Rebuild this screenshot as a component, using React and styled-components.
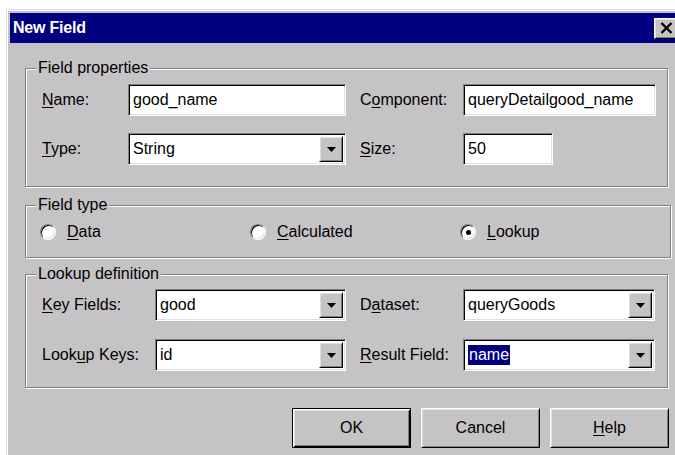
import React from 'react';
import styled, { createGlobalStyle, css } from 'styled-components';

const face = '#c6c3c6';

const GlobalStyle = createGlobalStyle`
  html, body {
    margin: 0;
    padding: 0;
    background: #fff;
    overflow: hidden;
  }
  body {
    font-family: 'Liberation Sans', Arial, sans-serif;
    font-size: 16px;
    color: #000;
  }
`;

// 3D edges shared by the controls
const sunken = css`
  box-sizing: border-box;
  background: #fff;
  border: 1px solid;
  border-color: #808080 #fff #fff #808080;
  box-shadow: inset 1px 1px 0 #000, inset -1px -1px 0 #dfdfdf;
`;

const raised = css`
  box-sizing: border-box;
  background: ${face};
  border: 1px solid;
  border-color: #fff #000 #000 #fff;
  box-shadow: inset 1px 1px 0 #dfdfdf, inset -1px -1px 0 #808080;
`;

const Window = styled.div`
  box-sizing: border-box;
  margin: 9px 0 0 6px;
  width: 680px;
  height: 460px;
  padding: 3px 0 0 3px;
  background: ${face};
  border-top: 1px solid #dcdcdc;
  border-left: 1px solid #dcdcdc;
  box-shadow: inset 1px 1px 0 #fff;
`;

const TitleBar = styled.div`
  display: flex;
  align-items: center;
  justify-content: space-between;
  height: 30px;
  padding: 0 8px 0 3px;
  background: #000080;
`;

const Title = styled.span`
  color: #fff;
  font-weight: bold;
  font-size: 16px;
  letter-spacing: -0.2px;
`;

const CloseButton = styled.button`
  ${raised};
  display: flex;
  align-items: center;
  justify-content: center;
  width: 24px;
  height: 21px;
  padding: 0;
`;

const Body = styled.div`
  display: flex;
  flex-direction: column;
  width: 644px;
  padding: 16px 0 0 15px;
`;

const Group = styled.fieldset`
  box-sizing: border-box;
  width: 643px;
  margin: ${p => p.$gap}px 0 0;
  padding: 0;
  border: 1px solid #808080;
  box-shadow: inset 1px 1px 0 #fff, 1px 1px 0 #fff;
`;

const Legend = styled.legend`
  margin-left: 10px;
  padding: 0 2px;
  line-height: 18px;
  background: ${face};
`;

const FieldGrid = styled.div`
  display: grid;
  grid-template-columns: ${p => p.$columns};
  column-gap: 14px;
  row-gap: ${p => p.$rowGap}px;
  align-items: center;
  padding: ${p => p.$pad};
`;

const Label = styled.label`
  white-space: nowrap;
`;

const Key = styled.span`
  text-decoration: underline;
  text-underline-offset: 2px;
`;

const TextField = styled.div`
  ${sunken};
  display: flex;
  align-items: center;
  height: 32px;
  width: ${p => (p.$width ? `${p.$width}px` : 'auto')};
  padding: 0 4px;
  white-space: nowrap;
`;

const Combo = styled.div`
  ${sunken};
  display: flex;
  height: 32px;
  padding: 2px;
`;

const ComboValue = styled.span`
  flex: 1;
  display: flex;
  align-items: center;
  padding-left: 2px;
`;

const Selected = styled.span`
  background: #000080;
  color: #fff;
  padding: 0 1px;
  line-height: 20px;
`;

const DropButton = styled.span`
  ${raised};
  display: flex;
  align-items: center;
  justify-content: center;
  width: 24px;
`;

const RadioRow = styled.div`
  display: grid;
  grid-template-columns: 210px 210px 210px;
  padding: 9px 0 16px 14px;
`;

const RadioOption = styled.label`
  display: flex;
  align-items: center;
  gap: 11px;
  height: 18px;
`;

const RadioCircle = styled.span`
  box-sizing: border-box;
  display: flex;
  align-items: center;
  justify-content: center;
  width: 16px;
  height: 16px;
  border-radius: 50%;
  background: #fff;
  border: 1px solid;
  border-color: #808080 #fff #fff #808080;
  box-shadow: inset 1px 1px 0 #000, inset -1px -1px 0 #dfdfdf;

  &::after {
    content: '';
    display: ${p => (p.$checked ? 'block' : 'none')};
    width: 5px;
    height: 5px;
    border-radius: 50%;
    background: #000;
  }
`;

const ButtonRow = styled.div`
  display: flex;
  justify-content: flex-end;
  gap: 10px;
  margin-top: 20px;
`;

const PushButton = styled.button`
  box-sizing: border-box;
  width: 119px;
  height: 40px;
  padding: 0;
  font: inherit;
  color: #000;
  background: ${face};
  border: 1px solid;
  ${p =>
    p.$default
      ? css`
          border-color: #000;
          box-shadow: inset 1px 1px 0 #fff, inset -1px -1px 0 #000,
            inset 2px 2px 0 #dfdfdf, inset -2px -2px 0 #808080;
        `
      : css`
          border-color: #fff #000 #000 #fff;
          box-shadow: inset 1px 1px 0 #dfdfdf, inset -1px -1px 0 #808080;
        `}
`;

const Arrow = () => (
  <svg width="9" height="5" viewBox="0 0 9 5">
    <path d="M0 0h9L4.5 5z" fill="#000" />
  </svg>
);

const CloseGlyph = () => (
  <svg width="13" height="12" viewBox="0 0 13 12">
    <path d="M1.5 1l10 10M11.5 1l-10 10" stroke="#000" strokeWidth="2.4" />
  </svg>
);

const ComboBox = ({ children }) => (
  <Combo>
    <ComboValue>{children}</ComboValue>
    <DropButton>
      <Arrow />
    </DropButton>
  </Combo>
);

const Radio = ({ checked, children }) => (
  <RadioOption>
    <RadioCircle $checked={checked} />
    <span>{children}</span>
  </RadioOption>
);

export default function App() {
  return (
    <>
      <GlobalStyle />
      <Window>
        <TitleBar>
          <Title>New Field</Title>
          <CloseButton>
            <CloseGlyph />
          </CloseButton>
        </TitleBar>

        <Body>
          <Group $gap={0}>
            <Legend>Field properties</Legend>
            <FieldGrid $columns="72px 218px 89px 193px" $rowGap={17} $pad="7px 0 21px 16px">
              <Label><Key>N</Key>ame:</Label>
              <TextField>good_name</TextField>
              <Label>C<Key>o</Key>mponent:</Label>
              <TextField>queryDetailgood_name</TextField>

              <Label><Key>T</Key>ype:</Label>
              <ComboBox>String</ComboBox>
              <Label><Key>S</Key>ize:</Label>
              <TextField $width={90}>50</TextField>
            </FieldGrid>
          </Group>

          <Group $gap={9}>
            <Legend>Field type</Legend>
            <RadioRow>
              <Radio><Key>D</Key>ata</Radio>
              <Radio><Key>C</Key>alculated</Radio>
              <Radio checked><Key>L</Key>ookup</Radio>
            </RadioRow>
          </Group>

          <Group $gap={7}>
            <Legend>Lookup definition</Legend>
            <FieldGrid $columns="99px 191px 89px 192px" $rowGap={18} $pad="6px 0 16px 16px">
              <Label><Key>K</Key>ey Fields:</Label>
              <ComboBox>good</ComboBox>
              <Label>D<Key>a</Key>taset:</Label>
              <ComboBox>queryGoods</ComboBox>

              <Label>Look<Key>u</Key>p Keys:</Label>
              <ComboBox>id</ComboBox>
              <Label><Key>R</Key>esult Field:</Label>
              <ComboBox><Selected>name</Selected></ComboBox>
            </FieldGrid>
          </Group>

          <ButtonRow>
            <PushButton $default>OK</PushButton>
            <PushButton>Cancel</PushButton>
            <PushButton><Key>H</Key>elp</PushButton>
          </ButtonRow>
        </Body>
      </Window>
    </>
  );
}
